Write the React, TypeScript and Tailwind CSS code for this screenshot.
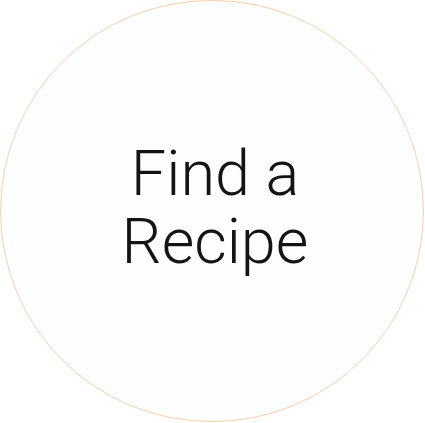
export default function App() {
  return (
    <div className="w-[425px] h-[423px] bg-white">
      <div className="w-[424px] h-[422px] rounded-full border border-[#fbcfa6] bg-[#fdfeff] flex items-center justify-center">
        <p className="text-center text-[63px] leading-[68px] font-light text-[#141414] font-['Roboto',sans-serif] pl-[6px] pb-[6px]">
          Find a
          <br />
          Recipe
        </p>
      </div>
    </div>
  )
}
